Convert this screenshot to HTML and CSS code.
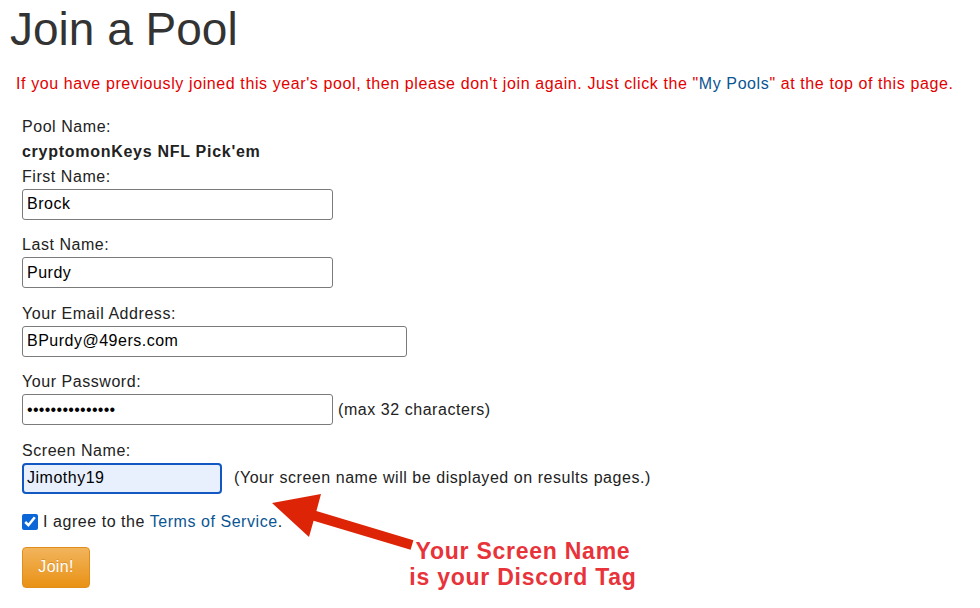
FILE: index.html
```html
<!DOCTYPE html>
<html>
<head>
<meta charset="utf-8">
<title>Join a Pool</title>
<link rel="stylesheet" href="styles.css">
</head>
<body>
<div class="page">
  <h1 class="title">Join a Pool</h1>
  <p class="notice">If you have previously joined this year's pool, then please don't join again. Just click the "<a class="link" href="#">My Pools</a>" at the top of this page.</p>
  <form class="form">
    <div class="line">Pool Name:</div>
    <div class="line pool-name">cryptomonKeys NFL Pick'em</div>
    <div class="field">
      <label class="line">First Name:</label>
      <input class="input w-md" type="text" value="Brock">
    </div>
    <div class="field">
      <label class="line">Last Name:</label>
      <input class="input w-md" type="text" value="Purdy">
    </div>
    <div class="field">
      <label class="line">Your Email Address:</label>
      <input class="input w-lg" type="text" value="BPurdy@49ers.com">
    </div>
    <div class="field">
      <label class="line">Your Password:</label>
      <div class="inline-row gap-sm">
        <input class="input w-md pw" type="password" value="passwordpasswor">
        <span>(max 32 characters)</span>
      </div>
    </div>
    <div class="field">
      <label class="line">Screen Name:</label>
      <div class="inline-row gap-lg">
        <input class="input w-sm focused" type="text" value="Jimothy19">
        <span>(Your screen name will be displayed on results pages.)</span>
      </div>
    </div>
    <div class="agree">
      <input class="check" type="checkbox" checked>
      <span>I agree to the <a class="link" href="#">Terms of Service</a>.</span>
    </div>
    <button class="join" type="button">Join!</button>
  </form>

  <svg class="arrow" width="160" height="65" viewBox="0 0 160 65">
    <polygon points="12,14 61,5 56.4,22.1 153.4,51.2 150.6,60.8 53.6,31.7 49,48" fill="#de2406"/>
  </svg>
  <div class="callout">Your Screen Name<br>is your Discord Tag</div>
</div>
</body>
</html>
```

FILE: styles.css
```css
html, body {
  margin: 0;
  padding: 0;
  background: #ffffff;
}

body {
  font-family: "Liberation Sans", Arial, Helvetica, sans-serif;
  font-size: 16px;
  letter-spacing: 0.55px;
  color: #222222;
}

.page {
  position: relative;
  padding: 0 10px;
  height: 608px;
  box-sizing: border-box;
}

.title {
  margin: 4px 0 0;
  font-size: 46px;
  line-height: 50px;
  font-weight: normal;
  letter-spacing: 0;
  color: #333333;
}

.notice {
  margin: 17.5px 0 0;
  padding-left: 6px;
  line-height: 24px;
  color: #e30000;
  white-space: nowrap;
  letter-spacing: 0.6px;
}

.link {
  color: #0a5592;
  text-decoration: none;
}

.form {
  margin-top: 18px;
  padding-left: 12px;
}

.line {
  display: block;
  line-height: 25px;
  height: 25px;
}

.pool-name {
  font-weight: bold;
  letter-spacing: 0.72px;
}

.field {
  margin-bottom: 12.5px;
}

.input {
  display: block;
  box-sizing: border-box;
  height: 31px;
  margin: 0;
  padding: 0 4px;
  border: 1px solid #7b7b7b;
  border-radius: 3px;
  background: #ffffff;
  font-family: "Liberation Sans", Arial, Helvetica, sans-serif;
  font-size: 16px;
  letter-spacing: 0.5px;
  color: #000000;
}

.pw {
  letter-spacing: 0.3px;
}

.w-sm { width: 200px; }
.w-md { width: 311px; }
.w-lg { width: 385px; }

.focused {
  border: 2px solid #1358c2;
  border-radius: 4px;
  background: #e8f0fe;
  padding: 0 3px;
  outline: none;
}

.inline-row {
  display: flex;
  align-items: center;
}

.gap-sm { gap: 5px; }
.gap-lg { gap: 12px; }

.agree {
  display: flex;
  align-items: center;
  gap: 5px;
  height: 25px;
  margin-top: 16px;
}

.check {
  width: 16px;
  height: 16px;
  margin: 0;
  accent-color: #0b66d8;
}

.join {
  display: block;
  margin-top: 12px;
  width: 68px;
  height: 41px;
  padding: 0;
  border: 1px solid #e08e1b;
  border-radius: 4px;
  background: linear-gradient(#f2b45c, #e99215);
  color: #ffffff;
  font-family: "Liberation Sans", Arial, Helvetica, sans-serif;
  font-size: 16px;
  letter-spacing: 0.3px;
  text-shadow: 0 -1px 0 rgba(0, 0, 0, 0.15);
}

.arrow {
  position: absolute;
  left: 260px;
  top: 485px;
}

.callout {
  position: absolute;
  left: 400px;
  top: 534px;
  width: 246px;
  text-align: center;
  font-size: 23px;
  line-height: 26px;
  font-weight: bold;
  letter-spacing: 0.75px;
  color: #e8333a;
}
```
